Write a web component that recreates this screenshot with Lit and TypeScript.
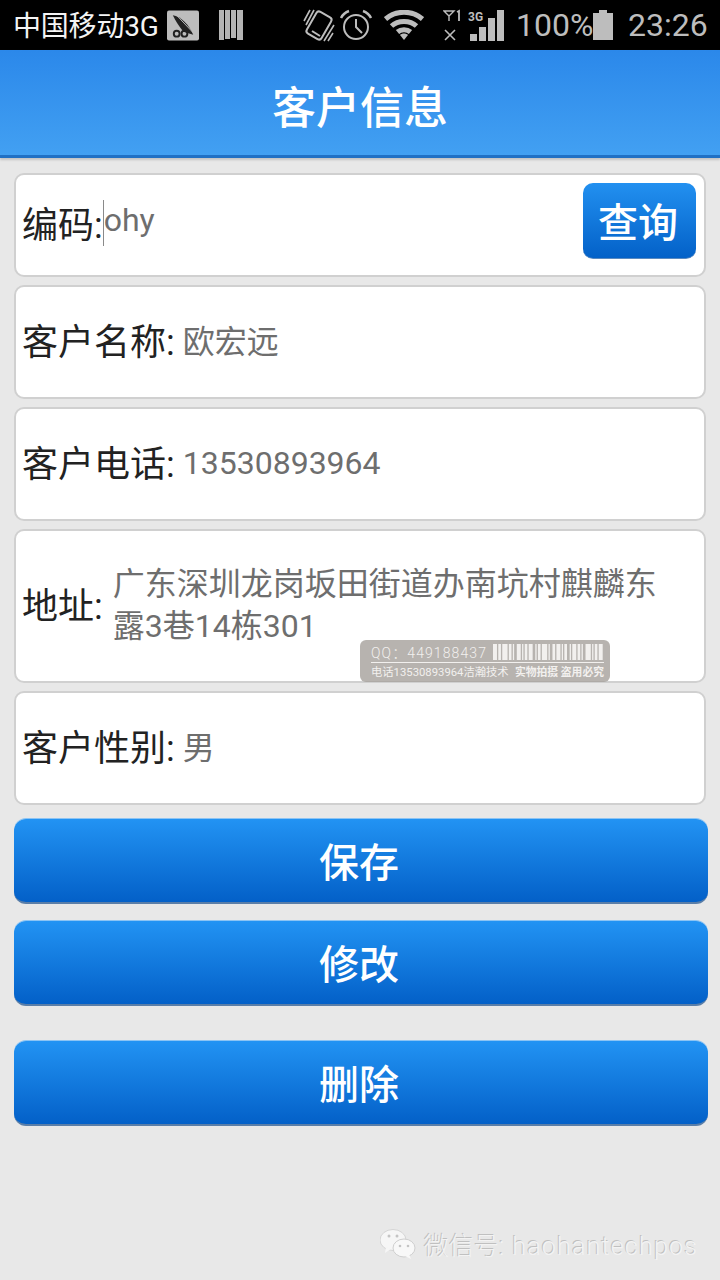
import { LitElement, html, css, svg } from "lit";
import { customElement } from "lit/decorators.js";

@customElement("app-root")
export class AppRoot extends LitElement {
  static styles = css`
    :host { display: block; width: 720px; height: 1280px; position: relative; overflow: hidden; background: #e8e8e8;
      font-family: Roboto, "Noto Sans CJK SC", sans-serif; }
    .status { height: 50px; background: #000; display: flex; align-items: center; color: #fff; box-sizing: border-box; padding: 0 0 0 13px; }
    .carrier { font-size: 28px; color: #f4f4f4; width: 154px; white-space: nowrap; margin-top: -2px; letter-spacing: -0.2px; }
    .status svg { display: block; flex: none; }
    .sim { margin-right: 20px; }
    .bars { margin-right: 60px; }
    .shake { margin-right: 4px; }
    .alarm { margin-right: 11px; }
    .wifi { margin-right: 19px; }
    .net { margin-right: 11px; }
    .pct { font-size: 32px; color: #bdbdbd; width: 77px; white-space: nowrap; }
    .batt { margin-right: 15px; }
    .clock { font-size: 32px; color: #bdbdbd; white-space: nowrap; }
    .header { height: 108px; box-sizing: border-box; background: linear-gradient(#2b88ea, #42a0f2); border-bottom: 3px solid #2070c4;
      box-shadow: 0 2px 2px #c4c4c4; display: flex; align-items: center; justify-content: center; padding-top: 5px;
      color: #fff; font-size: 44px; font-weight: 500; }
    .form { display: flex; flex-direction: column; padding: 15px 12px 0 14px; }
    .card { width: 692px; box-sizing: border-box; background: #fff; border: 2px solid #d0d0d0; border-radius: 10px; margin-bottom: 8px;
      display: flex; align-items: center; padding: 0 8px 0 6px; }
    .h104 { height: 104px; } .h114 { height: 114px; } .h154 { height: 154px; }
    .label { font-size: 36px; color: #222; white-space: nowrap; line-height: 44px; padding-top: 2px; }
    .value { font-size: 32px; color: #6e6e6e; margin-left: 8px; line-height: 42px; }
    .num { padding-bottom: 2px; }
    .addr { margin-left: 10px; width: 560px; margin-top: -2px; }
    .input { flex: 1; font-size: 32px; color: #6e6e6e; line-height: 40px; margin-bottom: 4px; }
    .caret { display: inline-block; width: 1px; height: 46px; background: #8a8a8a; vertical-align: middle; }
    .query { width: 113px; height: 76px; box-sizing: border-box; border-radius: 10px; background: linear-gradient(#2290f0, #0361c8);
      color: #fff; font-size: 40px; font-weight: 500; display: flex; align-items: center; justify-content: center; border-bottom: 1px solid #5a8ac0;
      margin-bottom: 8px; padding: 0 3px 2px 0; }
    .btn { width: 694px; height: 85px; box-sizing: border-box; border-radius: 12px; background: linear-gradient(#2293f3, #0360c8);
      border-bottom: 2px solid #5a7ea8; box-shadow: 0 -1px 0 #8cc4f4; color: #fff; font-size: 40px; font-weight: 500;
      display: flex; align-items: center; justify-content: center; padding: 0 4px 2px 0; }
    .b1 { margin-top: 6px; } .b2 { margin-top: 17px; } .b3 { margin-top: 35px; }
    .mark { position: absolute; left: 360px; top: 640px; width: 250px; height: 42px; border-radius: 6px; background: rgba(165,160,155,0.8); color: #f2f0ee; box-sizing: border-box; padding: 2px 6px 0 11px; }
    .mark .row1 { display: flex; align-items: center; height: 20px; font-size: 14px; letter-spacing: 1.1px; gap: 6px; white-space: nowrap; font-weight: 300; }
    .mark .rule { height: 1px; background: #f2f0ee; margin: 0 0 2px 0; }
    .mark .row2 { font-size: 11.3px; line-height: 15px; white-space: nowrap; display: flex; justify-content: space-between; }
    .mark .strong { font-weight: 700; font-size: 10.8px; }
    .barcode { width: 111px; height: 16px; flex: none; }
    .wechat { position: absolute; left: 380px; top: 1226px; display: flex; align-items: center; gap: 8px; color: #f3f3f3; font-size: 25px; font-weight: 300;
      text-shadow: -1px -1px 0 #c0c0c0; white-space: nowrap; }
    .latin { letter-spacing: 1.2px; margin-left: 8px; }
  `;

  private barcode() {
    const widths = [3,1,2,1,4,1,2,1,1,2,3,1,1,1,2,1,3,2,1,1,2,1,4,1,1,2,2,1,3,1,1,1,2,2,1,1,3,1,2,1,1,2,4,1,1,1,2,1,3,1];
    const total = widths.reduce((a, b) => a + b, 0);
    let x = 0;
    const rects = widths.map((w, i) => {
      const r = i % 2 === 0 ? svg`<rect x=${x} y="0" width=${w} height="16" fill="#f2f0ee"/>` : null;
      x += w;
      return r;
    });
    return html`<svg class="barcode" viewBox="0 0 ${total} 16" preserveAspectRatio="none">${rects}</svg>`;
  }

  render() {
    return html`
      <div class="status">
        <div class="carrier">中国移动3G</div>
        <svg class="sim" width="32" height="32" viewBox="0 0 33 32">
          <rect x="0" y="1" width="33" height="31" rx="2" fill="#bdbdbd"/>
          <path d="M6 6 C14 7 23 16 27 26 L17 23 C12 17 9 12 6 6Z" fill="#222"/>
          <path d="M9 5 L28 25" stroke="#bdbdbd" stroke-width="1"/>
          <circle cx="10" cy="25" r="3" fill="none" stroke="#222" stroke-width="2"/>
          <circle cx="18" cy="25" r="3" fill="none" stroke="#222" stroke-width="2"/>
        </svg>
        <svg class="bars" width="24" height="30" viewBox="0 0 24 30">
          <g fill="#b4b4b4"><rect x="0" y="0" width="5" height="30"/><rect x="6" y="0" width="5" height="29"/><rect x="12" y="0" width="5" height="28"/><rect x="18" y="0" width="6" height="30"/></g>
        </svg>
        <svg class="shake" width="32" height="34" viewBox="0 0 32 34" fill="none" stroke="#bdbdbd">
          <rect x="7.5" y="5" width="17" height="25" rx="3" transform="rotate(30 16 17.5)" stroke-width="2"/>
          <path d="M9 23 L17 28" stroke-width="2"/>
          <path d="M1 13 L7 2 M3 17 L11 2 M25 33 L30 25 M21 33 L31 17" stroke-width="1.6"/>
        </svg>
        <svg class="alarm" width="34" height="32" viewBox="0 0 34 32" fill="none" stroke="#bdbdbd">
          <circle cx="17" cy="18" r="12" stroke-width="2"/>
          <path d="M17 10 V18 L23 24" stroke-width="2"/>
          <path d="M2 9 C4 5 7 3 10 2 M32 9 C30 5 27 3 24 2" stroke-width="2.5"/>
        </svg>
        <svg class="wifi" width="40" height="30" viewBox="0 0 40 30" fill="none" stroke="#bdbdbd" stroke-width="5">
          <path d="M1.5 9 C12 0 28 0 38.5 9"/>
          <path d="M7.5 16 C14 10 26 10 32.5 16"/>
          <path d="M13.5 22 C17 19 23 19 26.5 22"/>
          <path d="M16 25 L20 30 L24 25 C22 23 18 23 16 25Z" fill="#bdbdbd" stroke="none"/>
        </svg>
        <svg class="net" width="62" height="32" viewBox="0 0 62 32" fill="none">
          <path d="M1 2 H11 L6 7Z M6 7 V12" stroke="#bdbdbd" stroke-width="1.4"/>
          <path d="M14 3 L16 2 V12" stroke="#bdbdbd" stroke-width="1.8"/>
          <path d="M2 21 L12 31 M12 21 L2 31" stroke="#bdbdbd" stroke-width="1.6"/>
          <text x="25" y="12" font-size="12" font-family="Roboto" font-weight="700" fill="#bdbdbd">3G</text>
          <g fill="#bdbdbd"><rect x="27" y="25" width="7" height="7"/><rect x="36" y="18" width="7" height="14"/><rect x="45" y="9" width="7" height="23"/><rect x="54" y="1" width="7" height="31"/></g>
        </svg>
        <div class="pct">100%</div>
        <svg class="batt" width="20" height="30" viewBox="0 0 20 30"><path d="M0 3 H6 V0 H14 V3 H20 V30 H0Z" fill="#bdbdbd"/></svg>
        <div class="clock">23:26</div>
      </div>
      <div class="header">客户信息</div>
      <div class="form">
        <div class="card h104">
          <span class="label">编码:</span>
          <span class="input"><span class="caret"></span>ohy</span>
          <div class="query">查询</div>
        </div>
        <div class="card h114"><span class="label">客户名称:</span><span class="value">欧宏远</span></div>
        <div class="card h114"><span class="label">客户电话:</span><span class="value num">13530893964</span></div>
        <div class="card h154"><span class="label">地址:</span><span class="value addr">广东深圳龙岗坂田街道办南坑村麒麟东露3巷14栋301</span></div>
        <div class="card h114"><span class="label">客户性别:</span><span class="value">男</span></div>
        <div class="btn b1">保存</div>
        <div class="btn b2">修改</div>
        <div class="btn b3">删除</div>
      </div>
      <div class="mark">
        <div class="row1"><span>QQ：449188437</span>${this.barcode()}</div>
        <div class="rule"></div>
        <div class="row2"><span>电话13530893964洁瀚技术</span><span class="strong">实物拍摄 盗用必究</span></div>
      </div>
      <div class="wechat">
        <svg width="36" height="30" viewBox="0 0 36 30">
          <ellipse cx="13" cy="11" rx="13" ry="10.5" fill="#f6f6f6" stroke="#d4d4d4"/>
          <path d="M6 18 L5 24 L11 20Z" fill="#f6f6f6"/>
          <ellipse cx="24" cy="19" rx="11" ry="9" fill="#f8f8f8" stroke="#cfcfcf"/>
          <path d="M29 25 L31 30 L25 27Z" fill="#f8f8f8"/>
          <circle cx="9" cy="7" r="1.5" fill="#c4c4c4"/><circle cx="17" cy="7" r="1.5" fill="#c4c4c4"/>
          <circle cx="20" cy="17" r="1.3" fill="#c4c4c4"/><circle cx="28" cy="17" r="1.3" fill="#c4c4c4"/>
        </svg>
        <span>微信号:<span class="latin">haohantechpos</span></span>
      </div>
    `;
  }
}
